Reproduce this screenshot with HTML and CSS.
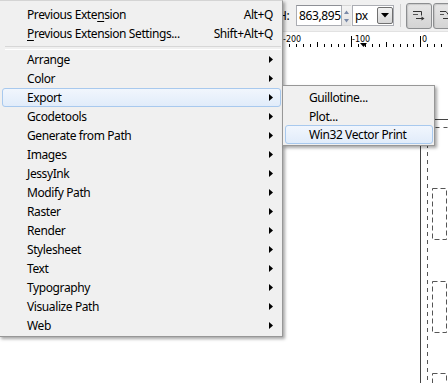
FILE: index.html
```html
<!DOCTYPE html>
<html>
<head>
<meta charset="utf-8">
<link rel="stylesheet" href="styles.css">
</head>
<body>
<div class="screen">
  <div class="toolbar">
    <span class="lbl">H:</span>
    <div class="field">863,895</div>
    <div class="spinbtns">
      <svg width="9" height="21" viewBox="0 0 9 21"><polygon points="2,8 4.5,4.5 7,8" fill="#7a8aa8"/><polygon points="2,13 4.5,16.5 7,13" fill="#7a8aa8"/></svg>
    </div>
    <div class="combo">
      <span class="combo-text">px</span>
      <span class="combo-btn"><svg width="8" height="5" viewBox="0 0 8 5"><polygon points="0,0 8,0 4,4.5" fill="#000"/></svg></span>
    </div>
    <div class="tsep"></div>
    <div class="tbtn">
      <svg width="12" height="10" viewBox="0 0 12 10"><path d="M0 0.5H8.5V4.5" fill="none" stroke="#333" stroke-width="1"/><path d="M0 3.5H5" stroke="#555" stroke-width="1"/><path d="M3 7.5H9" stroke="#333" stroke-width="1"/><polygon points="8.5,5.5 11.5,7.5 8.5,9.5" fill="#333"/></svg>
    </div>
    <div class="tbtn">
      <svg width="12" height="10" viewBox="0 0 12 10"><path d="M0 0.5H6L9 4.5" fill="none" stroke="#333" stroke-width="1"/><path d="M0 3.5H4" stroke="#555" stroke-width="1"/><path d="M3 7.5H9" stroke="#333" stroke-width="1"/><polygon points="8.5,5.5 11.5,7.5 8.5,9.5" fill="#333"/></svg>
    </div>
  </div>
  <div class="ruler">
    <svg class="ruler-svg" width="448" height="17" viewBox="0 0 448 17">
      <path d="M282.5 4V15 M351.5 4V15 M420.5 4V15" stroke="#000" stroke-width="1"/>
      <path d="M289.5 12V15 M296.5 12V15 M303.5 12V15 M310.5 12V15 M324.5 12V15 M331.5 12V15 M338.5 12V15 M344.5 12V15 M358.5 12V15 M365.5 12V15 M372.5 12V15 M379.5 12V15 M393.5 12V15 M400.5 12V15 M407.5 12V15 M413.5 12V15 M427.5 12V15 M434.5 12V15 M441.5 12V15" stroke="#000" stroke-width="1"/>
      <path d="M317.5 10V15 M386.5 10V15" stroke="#000" stroke-width="1"/>
      <polygon points="360,11 367,11 363.5,15" fill="#000"/>
      <text x="283" y="10" class="rtext">-200</text>
      <text x="352" y="10" class="rtext">-100</text>
      <text x="422" y="10" class="rtext">0</text>
    </svg>
  </div>
  <div class="canvas">
    <svg class="page-svg" width="448" height="334" viewBox="0 0 448 334">
      <path d="M420.5 70.5H448 M420.5 70.5V334" stroke="#444" stroke-width="1" fill="none"/>
      <path d="M427.5 79V334 M427.5 78.5H448" stroke="#555" stroke-width="1" stroke-dasharray="4 4" fill="none"/>
      <rect x="432.5" y="139.5" width="14" height="51" stroke="#555" stroke-width="1" stroke-dasharray="5 3" fill="none"/>
      <rect x="432.5" y="232.5" width="14" height="51" stroke="#555" stroke-width="1" stroke-dasharray="5 3" fill="none"/>
      <rect x="432.5" y="324.5" width="14" height="51" stroke="#555" stroke-width="1" stroke-dasharray="5 3" fill="none"/>
    </svg>
  </div>

  <div class="menu">
    <div class="mi"><span class="ml">Previous Exte<u>n</u>sion</span><span class="ms">Alt+Q</span></div>
    <div class="mi"><span class="ml"><u>P</u>revious Extension Settings...</span><span class="ms">Shift+Alt+Q</span></div>
    <div class="msep"></div>
    <div class="mi"><span class="ml">Arrange</span><span class="arr"></span></div>
    <div class="mi"><span class="ml">Color</span><span class="arr"></span></div>
    <div class="mi hl"><span class="ml">Export</span><span class="arr"></span></div>
    <div class="mi"><span class="ml">Gcodetools</span><span class="arr"></span></div>
    <div class="mi"><span class="ml">Generate from Path</span><span class="arr"></span></div>
    <div class="mi"><span class="ml">Images</span><span class="arr"></span></div>
    <div class="mi"><span class="ml">JessyInk</span><span class="arr"></span></div>
    <div class="mi"><span class="ml">Modify Path</span><span class="arr"></span></div>
    <div class="mi"><span class="ml">Raster</span><span class="arr"></span></div>
    <div class="mi"><span class="ml">Render</span><span class="arr"></span></div>
    <div class="mi"><span class="ml">Stylesheet</span><span class="arr"></span></div>
    <div class="mi"><span class="ml">Text</span><span class="arr"></span></div>
    <div class="mi"><span class="ml">Typography</span><span class="arr"></span></div>
    <div class="mi"><span class="ml">Visualize Path</span><span class="arr"></span></div>
    <div class="mi"><span class="ml">Web</span><span class="arr"></span></div>
  </div>

  <div class="submenu">
    <div class="si"><span class="ml">Guillotine...</span></div>
    <div class="si"><span class="ml">Plot...</span></div>
    <div class="si hl"><span class="ml">Win32 Vector Print</span></div>
  </div>
</div>
</body>
</html>
```

FILE: styles.css
```css
* { box-sizing: border-box; }
html, body { margin: 0; padding: 0; }
body {
  width: 448px;
  height: 383px;
  overflow: hidden;
  background: #fff;
  font-family: "Noto Sans", "Open Sans", sans-serif;
  font-size: 12px;
  letter-spacing: -0.4px;
  color: #000;
}
.screen {
  position: relative;
  width: 448px;
  height: 383px;
  display: flex;
  flex-direction: column;
  overflow: hidden;
}

/* toolbar */
.toolbar {
  flex: none;
  height: 32px;
  display: flex;
  align-items: center;
  background: #f0f0f0;
  border-bottom: 1px solid #e2e2e2;
  padding-left: 278px;
}
.toolbar > * { flex: none; }
.lbl { width: 13px; margin-right: 5px; }
.field {
  width: 46px;
  height: 21px;
  background: #fff;
  border: 1px solid #abadb3;
  border-top-color: #8e9096;
  padding-left: 2px;
  line-height: 19px;
  overflow: hidden;
  white-space: nowrap;
}
.spinbtns {
  width: 9px;
  height: 21px;
  display: flex;
  background: linear-gradient(#f4f4f4, #e4e4e4);
  border-top: 1px solid #d6d6d6;
  border-bottom: 1px solid #d6d6d6;
}
.spinbtns svg { display: block; }
.combo {
  margin-left: 1px;
  width: 42px;
  height: 21px;
  display: flex;
  align-items: center;
  justify-content: space-between;
  background: #fff;
  border: 1px solid #abadb3;
  padding-left: 2px;
}
.combo-text { line-height: 19px; }
.combo-btn {
  flex: none;
  width: 16px;
  height: 17px;
  display: flex;
  align-items: center;
  justify-content: center;
  background: linear-gradient(#f2f2f2, #d8d8d8);
  border: 1px solid #707070;
  border-radius: 2px;
}
.combo-btn svg { display: block; }
.tsep {
  margin-left: 6px;
  width: 1px;
  height: 23px;
  background: #cfcfcf;
}
.tbtn {
  margin-left: 5px;
  width: 26px;
  height: 26px;
  display: flex;
  align-items: center;
  justify-content: center;
  border: 1px solid #8c8e90;
  border-radius: 3px;
  background: linear-gradient(#e6e6e6, #d4d4d4);
  box-shadow: inset 1px 1px 1px rgba(0,0,0,0.12);
}
.tbtn + .tbtn { margin-left: 1px; }
.tbtn svg { display: block; }

/* ruler */
.ruler {
  flex: none;
  height: 17px;
  background: #fff;
}
.ruler-svg { display: block; }
.rtext {
  font-family: "DejaVu Sans", sans-serif;
  font-size: 8px;
  letter-spacing: 0;
  fill: #000;
}

/* canvas */
.canvas {
  flex: 1;
  background: #fff;
}
.page-svg { display: block; }

/* menus */
.menu {
  position: absolute;
  left: -1px;
  top: 0;
  width: 284px;
  background: #f0f0f0;
  border: 1px solid #979797;
  border-top-color: #d4d4d4;
  padding: 4px 1px 1px 2px;
  box-shadow: 2px 2px 3px rgba(0,0,0,0.35);
}
.mi, .si {
  height: 19px;
  display: flex;
  align-items: center;
  justify-content: space-between;
  border: 1px solid transparent;
  border-radius: 3px;
  white-space: nowrap;
}
.mi { padding: 0 7px 0 24px; }
.mi u, .si u { text-underline-offset: 2px; }
.hl {
  border-color: #a8c9ee;
  background: linear-gradient(#f1f6fd, #e1ecfa);
}
.arr {
  flex: none;
  width: 4px;
  height: 7px;
  background: #000;
  clip-path: polygon(0 0, 100% 50%, 0 100%);
}
.msep {
  height: 7px;
  margin: 0 0 0 3px;
  padding-top: 3px;
}
.msep::before {
  content: "";
  display: block;
  height: 2px;
  border-top: 1px solid #d7d7d7;
  border-bottom: 1px solid #ffffff;
}
.submenu {
  position: absolute;
  left: 282px;
  top: 85px;
  width: 153px;
  background: #f0f0f0;
  border: 1px solid #979797;
  padding: 2px 1px 1px 2px;
  box-shadow: 2px 2px 3px rgba(0,0,0,0.35);
}
.si { height: 18.7px; padding: 0 6px 0 23px; }
```
